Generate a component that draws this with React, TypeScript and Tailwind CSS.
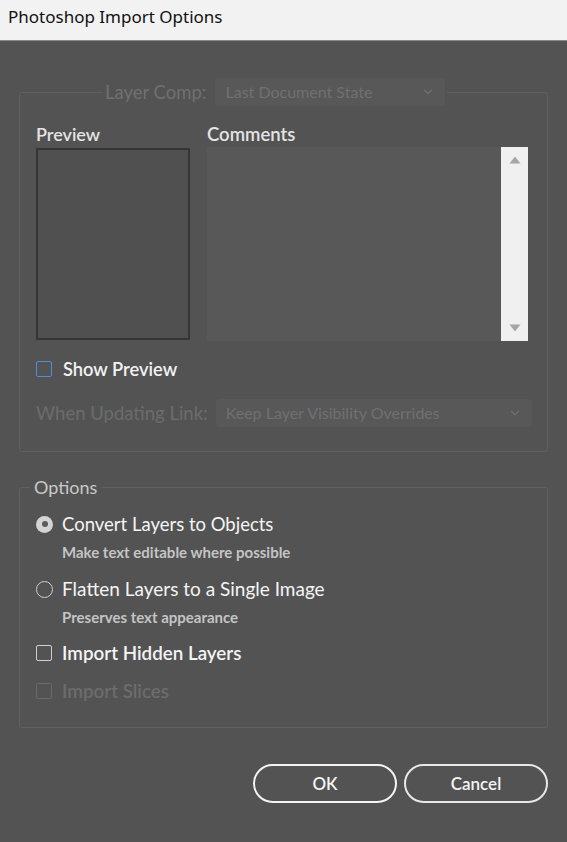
import { ChevronDown } from "lucide-react"

const font = { fontFamily: "Lato, 'Noto Sans', sans-serif" }

function Dropdown({ value, width }: { value: string; width: string }) {
  return (
    <div className={`flex h-[28px] items-center justify-between rounded-sm bg-[#585858] pl-[10px] pr-[10px] text-[#707070] ${width}`}>
      <span className="text-[16px] leading-[20px]">{value}</span>
      <ChevronDown className="h-[14px] w-[14px] text-[#707070]" strokeWidth={2} />
    </div>
  )
}

function Radio({ checked }: { checked?: boolean }) {
  return checked ? (
    <span className="flex h-[17px] w-[17px] items-center justify-center rounded-full bg-[#d4d4d4]">
      <span className="h-[6px] w-[6px] rounded-full bg-[#5a5a5a]" />
    </span>
  ) : (
    <span className="h-[17px] w-[17px] rounded-full border-[1.5px] border-[#cfcfcf]" />
  )
}

function Check({ tone }: { tone: "blue" | "white" | "dim" }) {
  const cls =
    tone === "blue" ? "border-[#4f8fd8]" : tone === "white" ? "border-[#d0d0d0]" : "border-[#6a6a6a]"
  return <span className={`h-[16px] w-[16px] rounded-[2px] border-[1.5px] ${cls}`} />
}

export default function App() {
  return (
    <div className="flex h-[842px] w-[567px] flex-col bg-[#535353]" style={font}>
      {/* title bar */}
      <div className="flex h-[41px] items-center border-b border-[#8a8a8a] bg-[#f2f2f2] pl-[8px] pb-[6px]">
        <span className="text-[17px] text-[#111]" style={{ fontFamily: "'Noto Sans', sans-serif" }}>
          Photoshop Import Options
        </span>
      </div>

      <div className="flex flex-col px-[19px] pt-[37px]">
        {/* layer comp group */}
        <fieldset className="rounded-[3px] border border-[#606060] pl-[16px] pr-[19px] pb-[24px]">
          <legend className="ml-[67px] flex items-center gap-[9px] px-[2px]">
            <span className="text-[18.5px] leading-[24px] text-[#707070]">Layer Comp:</span>
            <Dropdown value="Last Document State" width="w-[230px]" />
          </legend>

          <div className="mt-[16px] flex gap-[17px]">
            <div className="flex flex-col">
              <span className="text-[18px] leading-[24px] font-semibold text-[#e4e4e4]">Preview</span>
              <div className="mt-[2px] h-[192px] w-[154px] border-2 border-[#353535] bg-[#505050]" />
            </div>
            <div className="flex flex-1 flex-col">
              <span className="text-[18.5px] leading-[24px] font-semibold text-[#e4e4e4]">Comments</span>
              <div className="mt-[1px] flex h-[194px] justify-end bg-[#585858]">
                <div className="flex w-[27px] flex-col items-center justify-between bg-[#f0f0f0] py-[9px]">
                  <svg width="12" height="8" viewBox="0 0 12 8">
                    <path d="M6 0.5 L11.5 7.5 L0.5 7.5 Z" fill="#a6a6a6" />
                  </svg>
                  <svg width="12" height="8" viewBox="0 0 12 8">
                    <path d="M0.5 0.5 L11.5 0.5 L6 7.5 Z" fill="#a6a6a6" />
                  </svg>
                </div>
              </div>
            </div>
          </div>

          <label className="mt-[16px] flex h-[24px] items-center gap-[11px]">
            <Check tone="blue" />
            <span className="text-[18.3px] leading-[24px] font-semibold text-[#f2f2f2]">Show Preview</span>
          </label>

          <div className="mt-[18px] -mr-[4px] flex items-center gap-[8px]">
            <span className="text-[18.5px] leading-[24px] text-[#6c6c6c]">When Updating Link:</span>
            <Dropdown value="Keep Layer Visibility Overrides" width="flex-1" />
          </div>
        </fieldset>

        {/* options group */}
        <fieldset className="mt-[23px] rounded-[3px] border border-[#606060] pl-[16px] pr-[15px] pb-[24px]">
          <legend className="-ml-[6px] px-[4px] text-[18px] leading-[24px] text-[#c8c8c8]">Options</legend>

          <div className="flex flex-col">
            <div className="mt-[13px] flex h-[24px] items-center gap-[9px]">
              <Radio checked />
              <span className="text-[18.5px] leading-[24px] text-[#f4f4f4]">Convert Layers to Objects</span>
            </div>
            <span className="mt-[6px] pl-[26px] text-[15px] leading-[20px] font-bold text-[#c4c4c4]">
              Make text editable where possible
            </span>

            <div className="mt-[15px] flex h-[24px] items-center gap-[9px]">
              <Radio />
              <span className="text-[19px] leading-[24px] text-[#f4f4f4]">Flatten Layers to a Single Image</span>
            </div>
            <span className="mt-[6px] pl-[26px] text-[15px] leading-[20px] font-bold text-[#c4c4c4]">
              Preserves text appearance
            </span>

            <div className="mt-[14px] flex h-[24px] items-center gap-[10px]">
              <Check tone="white" />
              <span className="text-[18.8px] leading-[24px] font-semibold text-[#f4f4f4]">Import Hidden Layers</span>
            </div>

            <div className="mt-[14px] flex h-[24px] items-center gap-[10px]">
              <Check tone="dim" />
              <span className="text-[18.8px] leading-[24px] font-semibold text-[#6c6c6c]">Import Slices</span>
            </div>
          </div>
        </fieldset>

        {/* buttons */}
        <div className="mt-[36px] flex justify-end gap-[7px]">
          <button className="h-[39px] w-[144px] rounded-full border-2 border-[#f4f4f4] text-[17px] font-semibold text-[#f4f4f4]">
            OK
          </button>
          <button className="h-[39px] w-[144px] rounded-full border-2 border-[#e8e8e8] text-[17px] font-semibold text-[#f4f4f4]">
            Cancel
          </button>
        </div>
      </div>
    </div>
  )
}
